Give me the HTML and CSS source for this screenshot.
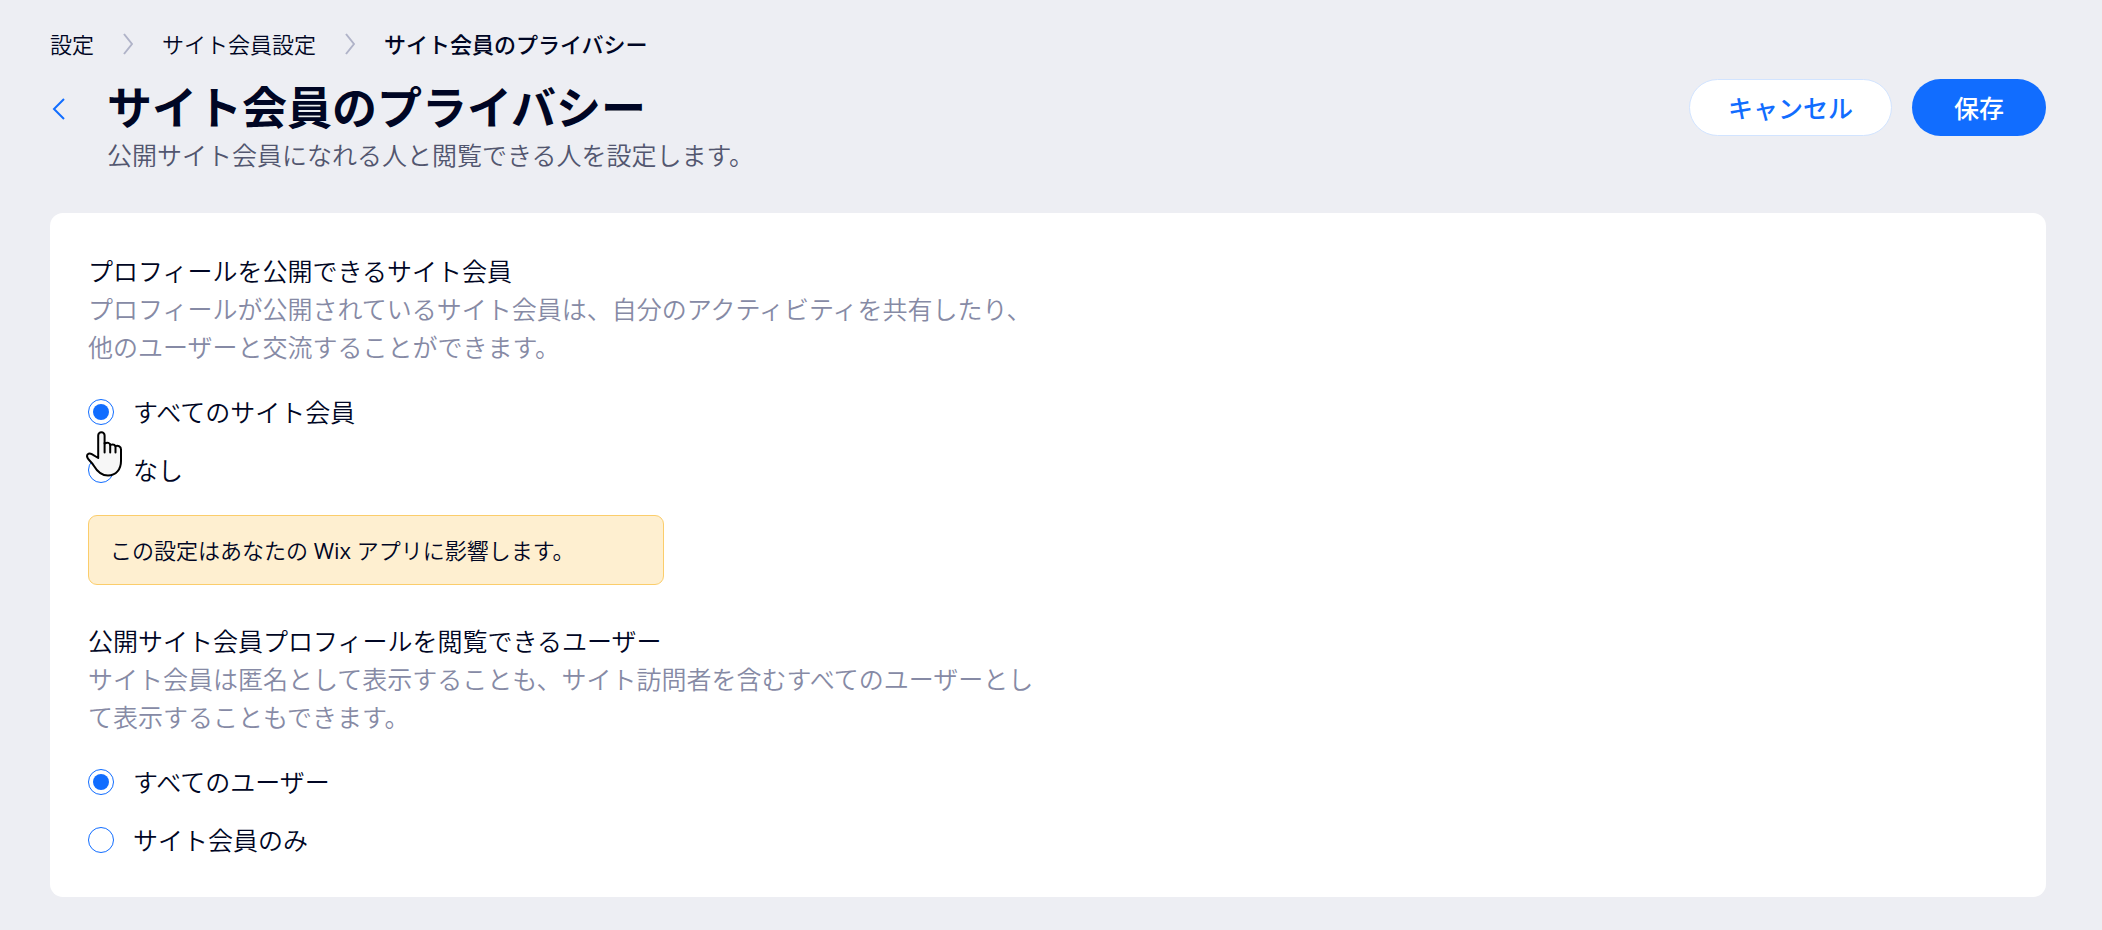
FILE: index.html
```
<!DOCTYPE html>
<html lang="ja">
<head>
  <meta charset="UTF-8" />
  <meta name="viewport" content="width=device-width, initial-scale=1.0" />
  <title>サイト会員のプライバシー</title>
  <link rel="stylesheet" href="styles.css">
</head>
<body>

<header>
  <nav class="breadcrumbs" aria-label="パンくずリスト">
    <a href="#">設定</a>
    <svg class="sep" viewBox="0 0 10 22" aria-hidden="true"><path d="M1 1l8 10-8 10"/></svg>
    <a href="#">サイト会員設定</a>
    <svg class="sep" viewBox="0 0 10 22" aria-hidden="true"><path d="M1 1l8 10-8 10"/></svg>
    <span class="current">サイト会員のプライバシー</span>
  </nav>

  <div class="page-head">
    <button class="back" type="button" aria-label="戻る">
      <svg viewBox="0 0 14 22" aria-hidden="true"><path d="M12 1L2 11l10 10"/></svg>
    </button>
    <div class="titles">
      <h1>サイト会員のプライバシー</h1>
      <p class="subtitle">公開サイト会員になれる人と閲覧できる人を設定します。</p>
    </div>
    <div class="actions">
      <button class="btn cancel" type="button">キャンセル</button>
      <button class="btn save" type="submit" form="privacy">保存</button>
    </div>
  </div>
</header>

<main>
  <form id="privacy" class="card">
    <!-- who can have a public profile -->
    <fieldset>
      <legend>プロフィールを公開できるサイト会員</legend>
      <p class="desc">プロフィールが公開されているサイト会員は、自分のアクティビティを共有したり、他のユーザーと交流することができます。</p>
      <div class="options">
        <label class="option"><input type="radio" name="profile" value="all" checked>すべてのサイト会員</label>
        <label class="option">
          <input type="radio" name="profile" value="none">なし
          <svg class="pointer" viewBox="0 0 36 46" aria-hidden="true">
            <path d="M12.2 27V4.5a3.2 3.2 0 0 1 6.4 0v8c3-1.6 5.2-.6 5.6 1.4 2.6-.9 4.6-.2 5.2 1.2 3-.8 5.6.4 5.6 3.4V30c0 8.5-5 14.5-13 14.5-6 0-10.5-3.5-14-9.5C5.5 30.5 1 28.5 1 25c0-2.4 2.6-3 4.8-1.8z"/>
            <path d="M18.6 12v9.5M24.2 13.5v8M29.5 15v6.5"/>
          </svg>
        </label>
      </div>
      <p class="notice">この設定はあなたの <span class="brand">Wix</span> アプリに影響します。</p>
    </fieldset>

    <!-- who can view public profiles -->
    <fieldset>
      <legend>公開サイト会員プロフィールを閲覧できるユーザー</legend>
      <p class="desc">サイト会員は匿名として表示することも、サイト訪問者を含むすべてのユーザーとして表示することもできます。</p>
      <div class="options">
        <label class="option"><input type="radio" name="viewer" value="all" checked>すべてのユーザー</label>
        <label class="option"><input type="radio" name="viewer" value="members">サイト会員のみ</label>
      </div>
    </fieldset>
  </form>
</main>

</body>
</html>
```

FILE: styles.css
```
:root   { --blue:#116dff; --ink:#000624; --bg:#edeef3; --muted:#868aa5; }
*       { box-sizing:border-box; margin:0; padding:0; }
body    { font-family:'Open Sans','Noto Sans CJK JP',sans-serif; font-size:25px; line-height:38px;
          font-weight:350; background:var(--bg); color:var(--ink); padding:29px 56px 32px 50px; }
button  { font:inherit; cursor:pointer; }

/* breadcrumbs */
.breadcrumbs   { display:flex; align-items:center; gap:29px; font-size:22px; line-height:30px; }
.breadcrumbs a { color:inherit; text-decoration:none; }
.sep           { width:10px; height:22px; fill:none; stroke:#b0b3c8; stroke-width:2; }
.current       { font-weight:500; }

/* title row */
.page-head { display:flex; align-items:flex-start; margin-top:20px; }
.back      { display:flex; align-items:center; width:57px; height:60px; border:none; background:none; }
.back svg  { width:14px; height:22px; margin-left:2px; fill:none; stroke:var(--blue); stroke-width:2; }
.titles    { flex:1; }
h1         { font-size:45px; line-height:57px; font-weight:700; }
.subtitle  { color:#52566f; }
.actions   { display:flex; gap:20px; }
.btn       { height:57px; border-radius:29px; font-weight:500; }
.cancel    { padding:0 38px; border:1px solid #d2e4ff; background:#fff; color:var(--blue); }
.save      { padding:0 42px; border:none; background:var(--blue); color:#fff; }

/* settings card */
.card     { margin-top:39px; padding:39px 38px 38px; background:#fff; border-radius:13px; }
fieldset  { border:none; }
fieldset + fieldset { margin-top:37px; }
.desc     { width:50%; color:var(--muted); }
.options  { display:flex; flex-direction:column; align-items:flex-start; gap:20px; margin-top:27px; }
.option   { position:relative; display:flex; align-items:center; gap:19px; cursor:pointer; }
.option input { appearance:none; display:grid; place-items:center; width:26px; height:26px;
                border:1px solid var(--blue); border-radius:50%; background:#fff; cursor:pointer; }
.option input:checked::before { content:''; width:16px; height:16px; border-radius:50%;
                                background:var(--blue); }
.pointer  { position:absolute; left:-2px; top:-20px; width:36px; height:46px; fill:#f7f7f7;
            stroke:#000; stroke-width:2; stroke-linecap:round; stroke-linejoin:round; }
.notice   { width:30%; margin-top:26px; padding:15px 21px; border:1px solid #fbcd6b;
            border-radius:9px; background:#feefd0; font-size:22px; }
.brand    { font-weight:400; }
```
